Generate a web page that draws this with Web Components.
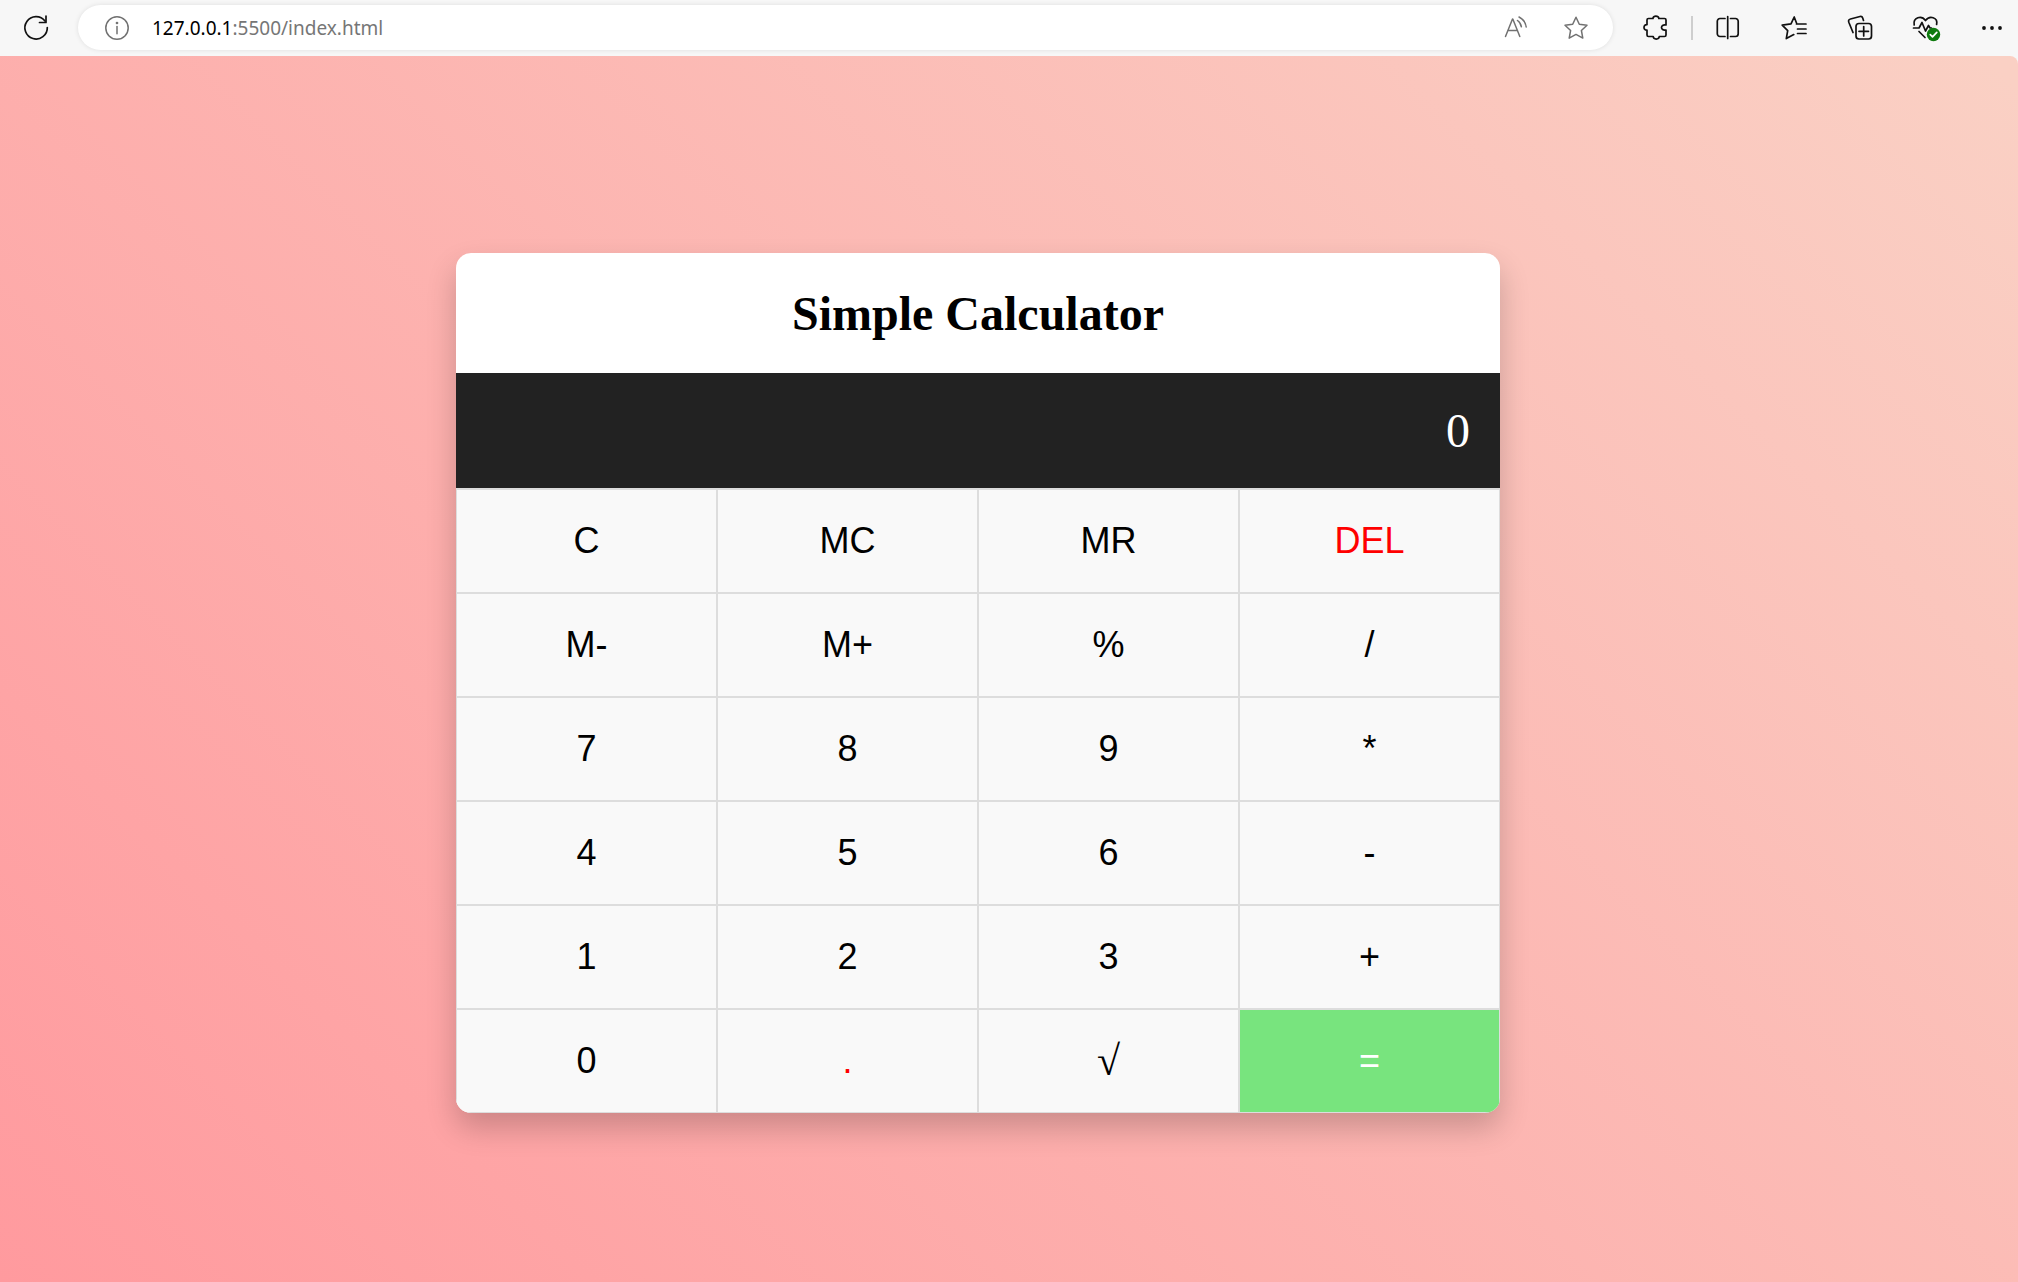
<!DOCTYPE html>
<html lang="en">
<head>
<meta charset="utf-8">
<title>Simple Calculator</title>
<style>
  html, body { margin: 0; height: 100%; }
  body { background: #f7f7f7; overflow: hidden; }
</style>
</head>
<body>
<app-window></app-window>

<script>
  const define = (name, html, setup) => customElements.define(name, class extends HTMLElement {
    connectedCallback() {
      if (this.shadowRoot) return;
      const root = this.attachShadow({ mode: 'open' });
      root.innerHTML = html;
      if (setup) setup(this, root);
    }
  });

  const ICONS = {
    refresh: '<path d="M23 7A11.200 11.200 0 1 0 25.300 13.500"/><path d="M24 2v6.500h-6.500"/>',
    info: '<g stroke-width="1.5"><circle cx="14" cy="14" r="11.2"/><path d="M14 12.5v7.2"/><circle cx="14" cy="9" r=".6" fill="currentColor"/></g>',
    read: '<g stroke-width="1.5"><path d="M2.500 22.500 9.500 5h.3l7 17.500M4.800 16.500h9.700M14.500 6.500q3.300 2.200 3.900 6.300M16 3q6.500 3.500 7.200 10"/></g>',
    star: '<path stroke-width="1.5" d="m14 3.200 3.300 7 7.700 1-5.600 5.300 1.400 7.600-6.800-3.700-6.800 3.700 1.400-7.600L3 11.200l7.700-1z"/>',
    puzzle: '<path d="M6.500 4.500H11c-.2-3.200 6-3.200 5.800 0h5.700q1.500 0 1.500 1.500v5c-6-1.200-6 6.200 0 5v5q0 1.500-1.500 1.500h-5.200c-.3 3.400-5.800 3.400-6.100 0H6.500Q5 22.500 5 21v-4.800c-4 .2-4-5.800 0-5.600V6q0-1.500 1.500-1.500z"/>',
    split: '<path d="M11 4.500H6A2.700 2.700 0 0 0 3.300 7.200v12.600A2.700 2.700 0 0 0 6 22.500H11M16.500 4.500H21.500a2.700 2.700 0 0 1 2.700 2.700v12.600a2.700 2.700 0 0 1-2.700 2.700H16.500M13.700 2.500v22"/>',
    favorites: '<path d="M16.500 9 14.200 3 11 9.800 2.200 11.200l5.500 5.400-1.400 8 7.500-4M16.500 10H26M17.500 15H26M17.500 19.500H26"/>',
    collections: '<path d="M7 18.500 2.800 8.300q-.9-2.500 1.700-3.300L14 2.500q2-.5 2.700 1.500l.8 2.500"/><rect x="10" y="9.500" width="15.500" height="15.500" rx="3"/><path d="M17.700 12.500v9.500M13 17.300h9.500"/>',
    health: '<path d="M2.200 11C.8 3.300 9.500 1 13.500 6.500 17.500 1 26.200 3.300 24.600 10.500M1.500 14H7l3-5.500 3.500 8.500 3-5.500 1.500 2.500h1.500M7 17.500l6 6"/><circle cx="21.500" cy="20.500" r="6.700" fill="#0f7b0f" stroke="none"/><path stroke="#fff" d="m18.300 20.700 2.200 2.200 4.300-4.600"/>',
    more: '<g fill="currentColor" stroke="none"><circle cx="6" cy="14" r="1.900"/><circle cx="14" cy="14" r="1.900"/><circle cx="22" cy="14" r="1.900"/></g>'
  };

  define('tool-button', `
    <style>
      :host { display: block; flex: none; color: #111; }
      :host([muted]) { color: #717171; }
      button { display: block; padding: 0; border: 0; background: none; color: inherit; }
      svg { display: block; width: 28px; height: 28px; fill: none; stroke: currentColor;
            stroke-width: 1.700; stroke-linecap: round; stroke-linejoin: round; overflow: visible; }
    </style>
    <button type="button"></button>`,
    (host, root) => {
      const button = root.querySelector('button');
      button.setAttribute('aria-label', host.getAttribute('label'));
      button.innerHTML = `<svg viewBox="0 0 28 28" aria-hidden="true">${ICONS[host.getAttribute('icon')]}</svg>`;
    });

  define('address-bar', `
    <style>
      :host { display: flex; flex: 1; align-items: center; box-sizing: border-box; height: 45px;
              padding: 0 23px 0 25px; border-radius: 23px; background: #fff;
              box-shadow: 0 0 5px rgba(0,0,0,.10); }
      .url { flex: 1; margin-left: 21px; color: #767676; text-decoration: none;
             font: 19px/28px "Segoe UI", "Noto Sans", "Open Sans", sans-serif; }
      b { font-weight: 400; color: #000; }
      .actions { display: flex; gap: 31px; }
    </style>
    <tool-button muted icon="info" label="Site information"></tool-button>
    <a class="url" href="#"><b>127.0.0.1</b>:5500/index.html</a>
    <div class="actions">
      <tool-button muted icon="read" label="Read aloud"></tool-button>
      <tool-button muted icon="star" label="Add to favorites"></tool-button>
    </div>`);

  define('browser-toolbar', `
    <style>
      :host { display: flex; align-items: center; box-sizing: border-box; height: 56px;
              padding: 0 12px 1px 22px; background: #f7f7f7; }
      address-bar { margin-left: 28px; }
      .tools { display: flex; align-items: center; gap: 38px; margin-left: 29px; }
      .first { display: flex; align-items: center; gap: 21px; }
      .rule { width: 2px; height: 24px; background: #cecece; }
    </style>
    <tool-button icon="refresh" label="Refresh"></tool-button>
    <address-bar></address-bar>
    <div class="tools">
      <div class="first">
        <tool-button icon="puzzle" label="Extensions"></tool-button>
        <span class="rule"></span>
        <tool-button icon="split" label="Split screen"></tool-button>
      </div>
      <tool-button icon="favorites" label="Favorites"></tool-button>
      <tool-button icon="collections" label="Collections"></tool-button>
      <tool-button icon="health" label="Browser essentials"></tool-button>
      <tool-button icon="more" label="Settings and more"></tool-button>
    </div>`);

  define('calc-key', `
    <style>
      :host { display: block; }
      button { display: block; box-sizing: border-box; width: 100%; padding: 30px; margin: 0;
               border: 1px solid #ddd; border-radius: 0; background: #f9f9f9; color: #000;
               font: 36px/42px "Liberation Sans", Arial, sans-serif; }
      :host([tone="red"]) button { color: #f00; }
      :host([tone="equals"]) button { background: #78e47e; color: #fff; }
      :host([symbol]) button { font-family: "Liberation Serif", serif; font-size: 42px; }
    </style>
    <button type="button"><slot></slot></button>`);

  define('simple-calculator', `
    <style>
      :host { display: block; width: 1044px; max-width: 100%; overflow: hidden; border-radius: 15px;
              background: #fff; box-shadow: 0 15px 30px rgba(0,0,0,.2);
              font-family: "Liberation Serif", "Times New Roman", serif; }
      h1 { margin: 0; padding: 33px 0 31px; font-size: 48px; line-height: 56px; text-align: center; color: #000; }
      output { display: block; padding: 30px; border-bottom: 1px solid #ddd; background: #222;
               background-clip: padding-box; color: #fff; font-size: 48px; line-height: 55px; text-align: right; }
      .keys { display: grid; grid-template-columns: repeat(4, 1fr); }
    </style>
    <h1>Simple Calculator</h1>
    <output>0</output>
    <div class="keys">
      <calc-key>C</calc-key><calc-key>MC</calc-key><calc-key>MR</calc-key><calc-key tone="red">DEL</calc-key>
      <calc-key>M-</calc-key><calc-key>M+</calc-key><calc-key>%</calc-key><calc-key>/</calc-key>
      <calc-key>7</calc-key><calc-key>8</calc-key><calc-key>9</calc-key><calc-key>*</calc-key>
      <calc-key>4</calc-key><calc-key>5</calc-key><calc-key>6</calc-key><calc-key>-</calc-key>
      <calc-key>1</calc-key><calc-key>2</calc-key><calc-key>3</calc-key><calc-key>+</calc-key>
      <calc-key>0</calc-key><calc-key tone="red">.</calc-key><calc-key symbol>√</calc-key><calc-key tone="equals">=</calc-key>
    </div>`);

  define('app-window', `
    <style>
      :host { display: flex; flex-direction: column; height: 100%; }
      main { flex: 1; display: flex; align-items: center; justify-content: center;
             padding: 28px 62px 0 0; border-top-right-radius: 8px;
             background: linear-gradient(45deg, #ff9a9e 0%, #fad0c4 99%, #fad0c4 100%); }
    </style>
    <browser-toolbar></browser-toolbar>
    <main><simple-calculator></simple-calculator></main>`);
</script>
</body>
</html>
